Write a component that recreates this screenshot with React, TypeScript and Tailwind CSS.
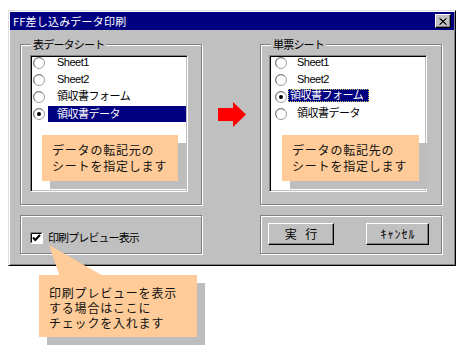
import React from "react";

const F = "font-['Liberation_Sans','Noto_Sans_CJK_JP',sans-serif]";
const J = "font-['Noto_Sans_CJK_JP',sans-serif]";

function Radio({ checked }: { checked?: boolean }) {
  return (
    <svg width="12" height="12" viewBox="0 0 12 12" className="shrink-0 block">
      <circle cx="6" cy="6" r="5.5" fill="#fff" stroke="#9c9c9c" />
      <path d="M2.2 9.5 A5 5 0 0 1 9.5 2.2" fill="none" stroke="#7a7a7a" />
      {checked && <circle cx="6" cy="6" r="2" fill="#000" />}
    </svg>
  );
}

function GroupLabel({ children }: { children: React.ReactNode }) {
  return (
    <span className={`absolute left-[10px] -top-[8px] bg-[#c0c0c0] px-[2px] text-[11px] leading-[15px] tracking-[-0.8px] text-black ${J}`}>
      {children}
    </span>
  );
}

const listBox =
  "bg-white w-[158px] h-[137px] border border-t-[#808080] border-l-[#808080] border-r-white border-b-white shadow-[inset_1px_1px_0_#000,inset_-1px_-1px_0_#c0c0c0] p-[1px] overflow-hidden";

const items = ["Sheet1", "Sheet2", "領収書フォーム", "領収書データ"];

function LeftList() {
  return (
    <div className={listBox}>
      <div className="-mt-[3px] flex flex-col">
        {items.map((t, i) => (
          <div key={t} className="h-[17px] flex items-center">
            <span className="ml-[1px]">
              <Radio checked={i === 3} />
            </span>
            <div
              className={
                i === 3
                  ? "ml-[3px] flex-1 h-[16px] mt-[1px] flex items-center pl-[9px] bg-[#000080] text-white text-[11px] tracking-[-0.5px]"
                  : "ml-[3px] flex-1 h-[16px] flex items-center pl-[9px] text-black text-[11px] tracking-[-0.5px]"
              }
            >
              {t}
            </div>
          </div>
        ))}
      </div>
    </div>
  );
}

function RightList() {
  return (
    <div className={listBox}>
      <div className="-mt-[3px] flex flex-col">
        {items.map((t, i) => (
          <div key={t} className="h-[17px] flex items-center">
            <span className="ml-[4px]">
              <Radio checked={i === 2} />
            </span>
            {i === 2 ? (
              <div className="ml-[1px] h-[13px] -mt-[2px] flex items-center pl-[2px] pr-[6px] bg-[#000080] text-white text-[11px] tracking-[-0.5px] outline outline-1 outline-dotted outline-[#c8c060] -outline-offset-1">
                {t}
              </div>
            ) : (
              <div className="ml-[1px] pl-[9px] h-[16px] flex items-center text-black text-[11px] tracking-[-0.5px]">{t}</div>
            )}
          </div>
        ))}
      </div>
    </div>
  );
}

const groupBox =
  "relative w-[182px] border border-[#808080] shadow-[inset_1px_1px_0_#fff,1px_1px_0_#fff]";

const btn =
  "h-[22px] flex items-center justify-center bg-[#c0c0c0] border border-t-white border-l-white border-r-black border-b-black shadow-[inset_-1px_-1px_0_#808080] text-black text-[12px] leading-none";

function Callout({ className, children }: { className: string; children: React.ReactNode }) {
  return (
    <div
      className={`absolute bg-[#ffcc99] shadow-[8px_8px_0_#bdbdbd] text-[#111] text-[12px] tracking-[0.8px] ${J} ${className}`}
    >
      {children}
    </div>
  );
}

export default function App() {
  return (
    <div className={`relative w-[466px] h-[355px] bg-white overflow-hidden ${F}`}>
      {/* Dialog window */}
      <div className="ml-[8px] mt-[10px] w-[448px] h-[256px] bg-[#c0c0c0] border border-t-[#dfdfdf] border-l-[#dfdfdf] border-r-black border-b-black shadow-[inset_1px_1px_0_#fff,inset_-1px_-1px_0_#808080] p-[1px] flex flex-col">
        {/* title bar */}
        <div className="h-[18px] bg-[#000080] flex items-center justify-between pl-[3px] pr-[3px]">
          <span className={`text-white text-[11px] leading-none tracking-[0.2px] ${J}`}>FF差し込みデータ印刷</span>
          <div className="w-[16px] h-[14px] bg-[#c0c0c0] border border-t-white border-l-white border-r-black border-b-black shadow-[inset_-1px_-1px_0_#808080] flex items-center justify-center">
            <svg width="8" height="7" viewBox="0 0 8 7" className="block">
              <path d="M0.5 0.5 L7 6.5 M1.5 0.5 L7.5 6.5 M7 0.5 L0.5 6.5 M7.5 0.5 L1 6.5" stroke="#000" strokeWidth="1" />
            </svg>
          </div>
        </div>

        {/* content */}
        <div className="pl-[10px] pt-[14px] flex flex-col">
          <div className="flex">
            <div className={`${groupBox} h-[161px] pl-[9px] pt-[10px]`}>
              <GroupLabel>表データシート</GroupLabel>
              <LeftList />
            </div>
            <div className="w-[58px] flex justify-center pt-[58px] pl-[1px]">
              <svg width="28" height="25" viewBox="0 0 28 25" className="block">
                <polygon points="0,6 15,6 15,0 28,12.5 15,25 15,19 0,19" fill="#ff0000" />
              </svg>
            </div>
            <div className={`${groupBox} h-[161px] pl-[8px] pt-[10px]`}>
              <GroupLabel>単票シート</GroupLabel>
              <RightList />
            </div>
          </div>

          <div className="flex mt-[10px]">
            <div className={`${groupBox} h-[39px] pl-[9px] pt-[16px]`}>
              <div className="flex items-center gap-[5px]">
                <svg width="13" height="12" viewBox="0 0 13 12" className="block shrink-0">
                  <rect x="0" y="0" width="13" height="12" fill="#fff" />
                  <path d="M0.5 11.5 V0.5 H12.5" fill="none" stroke="#808080" />
                  <path d="M1.5 10.5 V1.5 H11.5" fill="none" stroke="#000" />
                  <path d="M3 5.5 L5.3 8 L10 3" fill="none" stroke="#000" strokeWidth="2" />
                </svg>
                <span className="text-[11px] leading-none tracking-[-0.9px] text-black">印刷プレビュー表示</span>
              </div>
            </div>
            <div className="w-[58px]" />
            <div className={`${groupBox} h-[39px] pl-[7px] pt-[7px] flex items-start gap-[32px]`}>
              <div className={`${btn} w-[66px]`}>
                <span className={`${J} tracking-[3px] pl-[3px]`}>実 行</span>
              </div>
              <div className={`${btn} w-[63px]`}>
                <span className={`${J} tracking-[1px] text-[12px] pl-[1px]`}>ｷｬﾝｾﾙ</span>
              </div>
            </div>
          </div>
        </div>
      </div>

      {/* Annotations */}
      <Callout className="left-[42px] top-[135px] w-[136px] h-[46px] pl-[10px] pt-[7px] leading-[16px]">
        <div>データの転記元の</div>
        <div>シートを指定します</div>
      </Callout>
      <Callout className="left-[282px] top-[135px] w-[137px] h-[46px] pl-[10px] pt-[7px] leading-[16px]">
        <div>データの転記先の</div>
        <div>シートを指定します</div>
      </Callout>

      <svg width="64" height="34" viewBox="0 0 64 34" className="absolute left-[45px] top-[244px] block">
        <polygon points="4,1 15,33 60,33" fill="#ffcc99" />
      </svg>
      <Callout className="left-[39px] top-[275px] w-[158px] h-[62px] pl-[10px] pt-[10px] leading-[15px]">
        <div>印刷プレビューを表示</div>
        <div>する場合はここに</div>
        <div>チェックを入れます</div>
      </Callout>
    </div>
  );
}
